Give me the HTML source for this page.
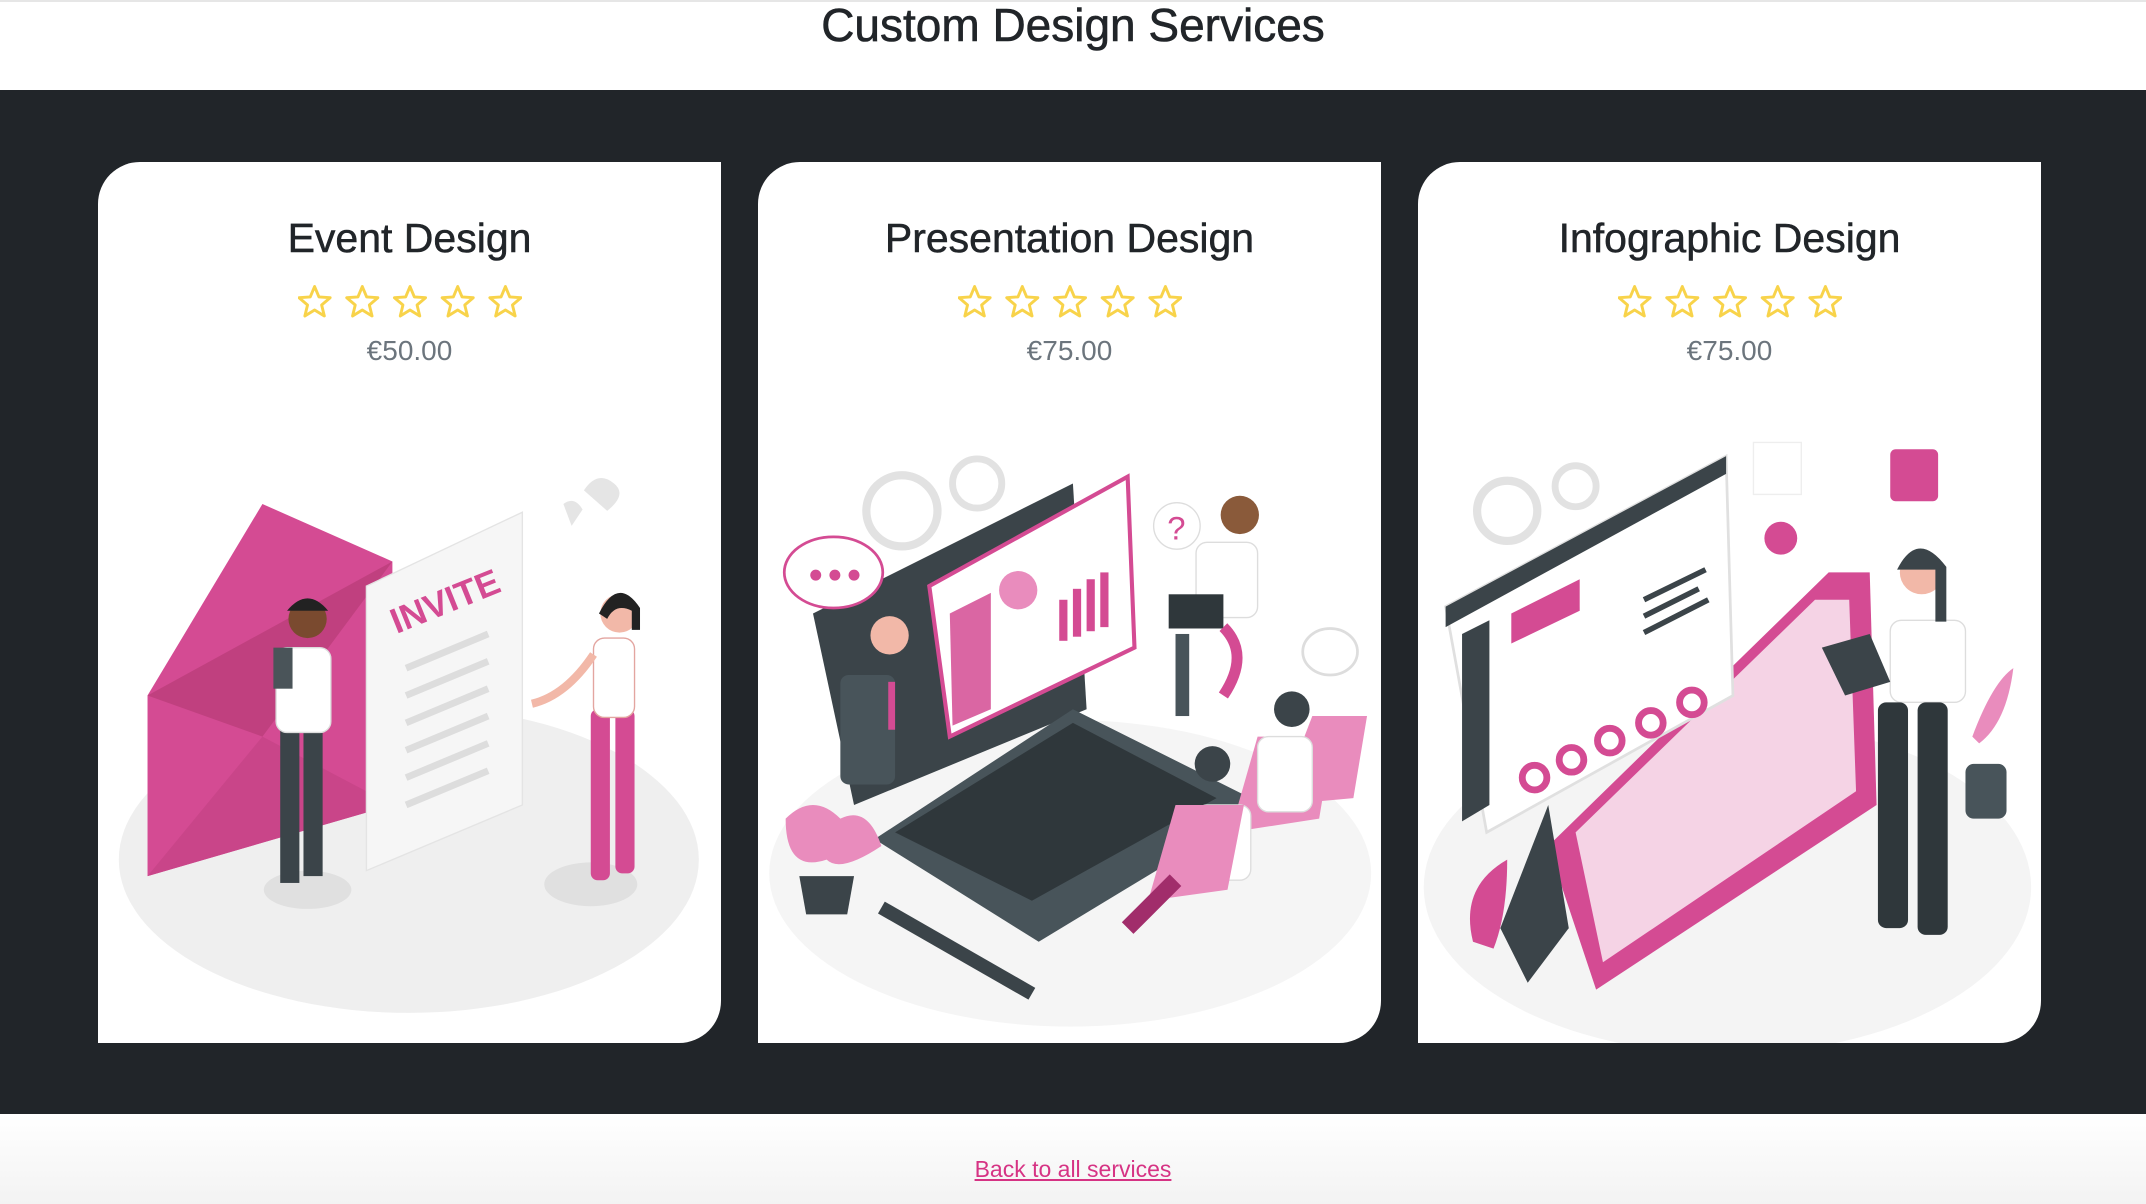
<!DOCTYPE html>
<html><head><meta charset="utf-8"><style>
html,body{margin:0;padding:0;width:2146px;height:1204px;overflow:hidden;background:#fff;font-family:"Liberation Sans",Arial,sans-serif}
.top{position:absolute;left:0;top:0;width:2146px;height:90px;border-top:2px solid #e6e6e6;box-sizing:border-box}
.top h1{margin:0;position:absolute;top:-4px;width:100%;text-align:center;font-size:46px;font-weight:500;color:#212529;-webkit-text-stroke:0.6px #212529}
.band{position:absolute;left:0;top:90px;width:2146px;height:1024px;background:#212529}
.card{position:absolute;top:162px;width:623px;height:881px;background:#fff;border-radius:42px 0 42px 0;overflow:hidden}
.card h2{position:absolute;margin:0;width:100%;text-align:center;font-size:41px;font-weight:500;color:#212529;top:53px;-webkit-text-stroke:0.5px #212529}
.stars{position:absolute;top:118px;left:0;width:100%;height:40px}
.stars svg{position:absolute;left:50%;margin-left:-112px;width:224px;height:40px;top:0}
.price{position:absolute;top:173px;width:100%;text-align:center;font-size:28px;color:#6c757d}
.card > svg{position:absolute;left:0;top:0;width:623px;height:881px}
.foot{position:absolute;left:0;top:1114px;width:2146px;height:90px;background:linear-gradient(#fff,#f3f3f3)}
.foot a{position:absolute;top:42px;width:100%;text-align:center;font-size:23px;color:#d63384;text-decoration:underline}
</style></head><body>
<div class="top"><h1>Custom Design Services</h1></div>
<div class="band"></div>

<svg width="0" height="0" style="position:absolute"><defs>
<g id="st"><polygon points="16,2 20.2,12 31,12.8 22.8,19.8 25.4,30.4 16,24.6 6.6,30.4 9.2,19.8 1,12.8 11.8,12" fill="none" stroke="#f8d34a" stroke-width="2.8" stroke-linejoin="round"/></g>
<g id="row"><use href="#st" x="0" y="3"/><use href="#st" x="46" y="3"/><use href="#st" x="92" y="3"/><use href="#st" x="138" y="3"/><use href="#st" x="184" y="3"/></g>
</defs></svg>

<div class="card" style="left:98px">
<svg viewBox="0 0 455 644">
<ellipse cx="227" cy="510" rx="212" ry="112" fill="#efefef"/>
<polygon points="36,522 36,390 120,250 215,292 215,470" fill="#d44b93"/>
<polygon points="36,390 120,420 215,292" fill="#c0407f"/>
<polygon points="36,522 120,420 215,470" fill="#c94589"/>
<polygon points="196,310 310,256 310,470 196,518" fill="#f6f6f6" stroke="#e4e4e4"/>
<text x="218" y="345" transform="rotate(-22 218 345)" font-size="26" font-weight="bold" fill="#d44b93" font-family="Liberation Sans">INVITE</text>
<g stroke="#ddd" stroke-width="5"><line x1="225" y1="370" x2="285" y2="345"/><line x1="225" y1="390" x2="285" y2="365"/><line x1="225" y1="410" x2="285" y2="385"/><line x1="225" y1="430" x2="285" y2="405"/><line x1="225" y1="450" x2="285" y2="425"/><line x1="225" y1="470" x2="285" y2="445"/></g>
<ellipse cx="153" cy="532" rx="32" ry="14" fill="#e0e0e0"/>
<rect x="133" y="412" width="14" height="115" fill="#3b4449"/><rect x="150" y="412" width="14" height="110" fill="#3b4449"/>
<rect x="130" y="355" width="40" height="62" rx="8" fill="#fff" stroke="#ddd"/>
<rect x="128" y="355" width="14" height="30" fill="#4a5459"/>
<circle cx="153" cy="334" r="14" fill="#7a4a2f"/><path d="M138 328 q15 -18 30 0" fill="#222"/>
<ellipse cx="360" cy="528" rx="34" ry="16" fill="#e0e0e0"/>
<rect x="360" y="400" width="14" height="125" rx="5" fill="#d44b93"/><rect x="378" y="400" width="14" height="120" rx="5" fill="#d44b93"/>
<rect x="362" y="348" width="30" height="58" rx="8" fill="#fff" stroke="#e3a5a0"/>
<circle cx="381" cy="330" r="14" fill="#f2b8a8"/><path d="M366 330 q14 -28 30 -4 v16 h-6 v-14 q-12 -6 -18 6z" fill="#222"/>
<path d="M362 360 q-20 30 -45 36" stroke="#f2b8a8" stroke-width="6" fill="none"/>
<path d="M355 240 q10 -15 22 -5 q10 8 -5 20z M340 250 q8 -6 14 4 l-8 12z" fill="#e5e5e5"/>
</svg>
<h2>Event Design</h2><div class="stars"><svg viewBox="0 0 216 36"><use href="#row"/></svg></div><div class="price">€50.00</div></div>

<div class="card" style="left:758px">
<svg viewBox="0 0 455 644">
<ellipse cx="228" cy="520" rx="220" ry="112" fill="#f5f5f5"/>
<circle cx="105" cy="255" r="26" fill="none" stroke="#e2e2e2" stroke-width="6"/><circle cx="160" cy="235" r="18" fill="none" stroke="#e2e2e2" stroke-width="5"/>
<polygon points="40,330 230,235 240,400 70,470" fill="#3b4449"/>
<polygon points="85,495 230,400 370,470 205,570" fill="#48545a"/>
<polygon points="100,490 230,410 335,465 200,540" fill="#2f373b"/>
<polygon points="125,310 270,230 275,355 140,420" fill="#fff" stroke="#d44b93" stroke-width="3"/>
<polygon points="140,330 170,315 170,400 142,412" fill="#d44b93" opacity=".85"/>
<circle cx="190" cy="313" r="14" fill="#e98cbd"/>
<g fill="#d44b93"><rect x="220" y="320" width="6" height="30"/><rect x="230" y="312" width="6" height="35"/><rect x="240" y="305" width="6" height="38"/><rect x="250" y="300" width="6" height="40"/></g>
<ellipse cx="55" cy="300" rx="36" ry="26" fill="#fff" stroke="#d44b93" stroke-width="2"/>
<g fill="#d44b93"><circle cx="42" cy="302" r="4"/><circle cx="56" cy="302" r="4"/><circle cx="70" cy="302" r="4"/></g>
<circle cx="306" cy="266" r="17" fill="#fff" stroke="#ddd"/><text x="299" y="276" font-size="24" fill="#d44b93" font-family="Liberation Sans">?</text>
<ellipse cx="418" cy="358" rx="20" ry="17" fill="#fff" stroke="#ddd" stroke-width="2"/>
<rect x="60" y="375" width="40" height="80" rx="6" fill="#48545a"/><circle cx="96" cy="346" r="14" fill="#f2b8a8"/>
<rect x="95" y="380" width="5" height="35" fill="#d44b93"/>
<rect x="320" y="278" width="45" height="55" rx="8" fill="#fff" stroke="#ddd"/><circle cx="352" cy="258" r="14" fill="#8a5a3a"/>
<rect x="305" y="345" width="10" height="60" fill="#48545a"/><rect x="300" y="316" width="40" height="25" fill="#2f373b"/>
<path d="M340 340 q20 20 0 50" stroke="#d44b93" stroke-width="8" fill="none"/>
<path d="M345 490 l20 -70 h55 l-10 60z" fill="#e98cbd"/><path d="M380 470 l25 -65 h40 l-10 60z" fill="#e98cbd"/>
<rect x="365" y="420" width="40" height="55" rx="8" fill="#fff" stroke="#ddd"/><circle cx="390" cy="400" r="13" fill="#3b4449"/>
<rect x="320" y="470" width="40" height="55" rx="8" fill="#fff" stroke="#ddd"/><circle cx="332" cy="440" r="13" fill="#3b4449"/>
<path d="M285 540 l20 -70 h50 l-12 62z" fill="#e98cbd"/>
<path d="M270 560 l35 -35" stroke="#a12d6b" stroke-width="12"/>
<line x1="90" y1="545" x2="200" y2="608" stroke="#3b4449" stroke-width="10"/>
<path d="M20 480 q20 -20 40 0 q20 -10 30 20 q-30 20 -40 10 q-30 10 -30 -30z" fill="#e98cbd"/>
<path d="M30 522 h40 l-5 28 h-30z" fill="#3b4449"/>
</svg>
<h2>Presentation Design</h2><div class="stars"><svg viewBox="0 0 216 36"><use href="#row"/></svg></div><div class="price">€75.00</div></div>

<div class="card" style="left:1418px">
<svg viewBox="0 0 455 644">
<ellipse cx="226" cy="530" rx="222" ry="122" fill="#f4f4f4"/>
<circle cx="65" cy="255" r="22" fill="none" stroke="#e2e2e2" stroke-width="6"/><circle cx="115" cy="237" r="15" fill="none" stroke="#e2e2e2" stroke-width="5"/>
<polygon points="95,500 300,300 330,300 335,470 130,605" fill="#d44b93"/>
<polygon points="115,490 290,320 315,320 320,460 135,585" fill="#f5d3e5"/>
<polygon points="60,560 95,470 110,560 80,600" fill="#3b4449"/>
<polygon points="20,325 225,215 230,390 50,490" fill="#fff" stroke="#e0e0e0" stroke-width="2"/>
<polygon points="20,325 225,215 225,228 20,340" fill="#3b4449"/>
<polygon points="32,345 52,335 52,470 32,482" fill="#3b4449"/>
<polygon points="68,330 118,305 118,328 68,352" fill="#d44b93"/>
<g stroke="#3b4449" stroke-width="4"><line x1="165" y1="320" x2="210" y2="298"/><line x1="165" y1="332" x2="205" y2="312"/><line x1="165" y1="344" x2="212" y2="320"/></g>
<g fill="none" stroke="#d44b93" stroke-width="5"><circle cx="85" cy="450" r="9"/><circle cx="112" cy="437" r="9"/><circle cx="140" cy="423" r="9"/><circle cx="170" cy="410" r="9"/><circle cx="200" cy="395" r="9"/></g>
<rect x="245" y="205" width="35" height="38" fill="#fff" stroke="#eee"/>
<circle cx="265" cy="275" r="12" fill="#d44b93"/>
<rect x="345" y="210" width="35" height="38" rx="4" fill="#d44b93"/>
<rect x="345" y="335" width="55" height="60" rx="8" fill="#fff" stroke="#ddd"/>
<rect x="336" y="395" width="22" height="165" rx="6" fill="#2f373b"/><rect x="365" y="395" width="22" height="170" rx="6" fill="#2f373b"/>
<circle cx="368" cy="300" r="16" fill="#f2b8a8"/><path d="M350 298 q15 -30 36 -2 v40 h-8 v-38z" fill="#3b4449"/>
<polygon points="295,355 330,345 345,380 312,390" fill="#3b4449"/>
<path d="M405 420 q15 -40 30 -50 q-5 40 -25 55z" fill="#e98cbd"/><rect x="400" y="440" width="30" height="40" rx="6" fill="#48545a"/>
<path d="M40 570 q-10 -40 25 -60 q0 40 -10 65z" fill="#d44b93"/>
</svg>
<h2>Infographic Design</h2><div class="stars"><svg viewBox="0 0 216 36"><use href="#row"/></svg></div><div class="price">€75.00</div></div>

<div class="foot"><a>Back to all services</a></div>
</body></html>
